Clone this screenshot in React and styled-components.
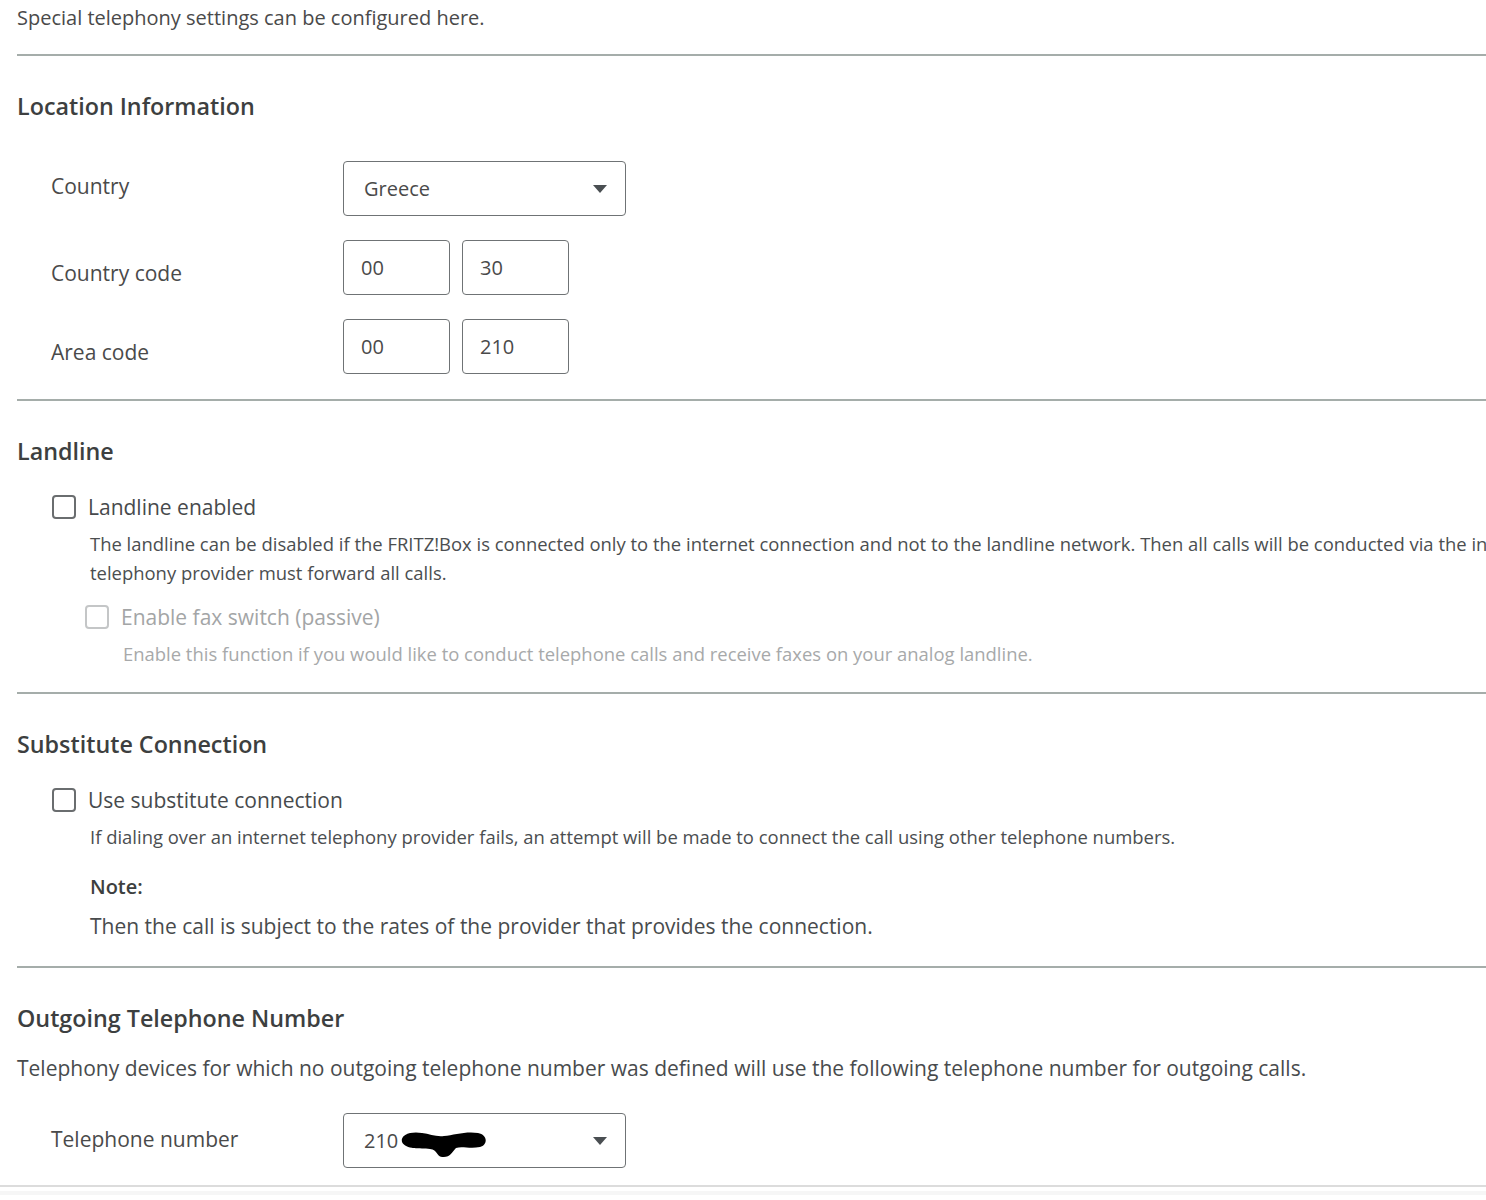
import React from "react";
import styled, { createGlobalStyle } from "styled-components";

const GlobalStyle = createGlobalStyle`
  html, body {
    margin: 0;
    padding: 0;
    background: #fff;
    overflow-x: hidden;
  }
  body {
    font-family: "Open Sans", "Noto Sans", "Liberation Sans", sans-serif;
    color: #484848;
  }
`;

const locationRows = [
  { label: "Country", kind: "select", value: "Greece", shift: -3 },
  { label: "Country code", kind: "pair", values: ["00", "30"], shift: 5 },
  { label: "Area code", kind: "pair", values: ["00", "210"], shift: 5 },
];

const Caret = () => (
  <CaretIcon viewBox="0 0 14 8" aria-hidden="true">
    <path d="M0 0 L14 0 L7 8 Z" fill="#4a4f52" />
  </CaretIcon>
);

const Redaction = () => (
  <RedactIcon viewBox="0 0 92 30" aria-hidden="true">
    <path
      d="M6 14 C4 6 16 3 26 5 C34 6 40 9 48 8 C58 7 70 3 82 5 C92 7 92 17 84 19 C74 21 66 18 60 20 C56 24 54 30 46 29 C40 28 42 22 34 21 C24 20 10 22 6 14 Z"
      fill="#000"
    />
  </RedactIcon>
);

const Checkbox = ({ disabled }) => <Box $disabled={disabled} />;

const App = () => {
  return (
    <>
      <GlobalStyle />
      <Page>
        <Intro>Special telephony settings can be configured here.</Intro>

        <Section $bottom={25}>
          <Heading>Location Information</Heading>
          <Rows>
            {locationRows.map((row) => (
              <FormRow key={row.label}>
                <Label $shift={row.shift}>{row.label}</Label>
                {row.kind === "select" ? (
                  <Select>
                    <span>{row.value}</span>
                    <Caret />
                  </Select>
                ) : (
                  <Pair>
                    {row.values.map((v, i) => (
                      <TextInput key={i}>{v}</TextInput>
                    ))}
                  </Pair>
                )}
              </FormRow>
            ))}
          </Rows>
        </Section>

        <Section $bottom={24}>
          <Heading>Landline</Heading>
          <Option>
            <CheckRow>
              <Checkbox />
              <CheckLabel>Landline enabled</CheckLabel>
            </CheckRow>
            <Explain>
              The landline can be disabled if the FRITZ!Box is connected only to the internet
              connection and not to the landline network. Then all calls will be conducted via the
              internet. Your internet telephony provider must forward all calls.
            </Explain>
            <SubOption>
              <CheckRow>
                <Checkbox disabled />
                <CheckLabel $disabled>Enable fax switch (passive)</CheckLabel>
              </CheckRow>
              <Explain $disabled>
                Enable this function if you would like to conduct telephone calls and receive faxes
                on your analog landline.
              </Explain>
            </SubOption>
          </Option>
        </Section>

        <Section $bottom={25}>
          <Heading>Substitute Connection</Heading>
          <Option>
            <CheckRow>
              <Checkbox />
              <CheckLabel>Use substitute connection</CheckLabel>
            </CheckRow>
            <Explain>
              If dialing over an internet telephony provider fails, an attempt will be made to
              connect the call using other telephone numbers.
            </Explain>
            <Note>
              <NoteTitle>Note:</NoteTitle>
              <NoteText>
                Then the call is subject to the rates of the provider that provides the connection.
              </NoteText>
            </Note>
          </Option>
        </Section>

        <Section $bottom={17}>
          <Heading>Outgoing Telephone Number</Heading>
          <Lead>
            Telephony devices for which no outgoing telephone number was defined will use the
            following telephone number for outgoing calls.
          </Lead>
          <Rows $top={30}>
            <FormRow>
              <Label $shift={-2}>Telephone number</Label>
              <Select>
                <Masked>
                  210
                  <Redaction />
                </Masked>
                <Caret />
              </Select>
            </FormRow>
          </Rows>
        </Section>
      </Page>
      <Footer />
    </>
  );
};

export default App;

/* ================== STYLES ================== */

const Page = styled.div`
  width: 1800px;
  padding-left: 17px;
`;

const Intro = styled.p`
  margin: 0;
  font-size: 20px;
  line-height: 36px;
  color: #4a4a4a;
  padding-bottom: 18px;
`;

const Section = styled.section`
  border-top: 2px solid #a5adaa;
  padding: 35px 0 ${(p) => (p.$bottom != null ? p.$bottom : 24)}px;
`;

const Heading = styled.h2`
  margin: 0;
  font-size: 23.3px;
  line-height: 30px;
  font-weight: 600;
  color: #3d3f40;
`;

const Rows = styled.div`
  display: flex;
  flex-direction: column;
  gap: 24px;
  margin-top: ${(p) => (p.$top != null ? p.$top : 40)}px;
  padding-left: 34px;
`;

const FormRow = styled.div`
  display: flex;
  align-items: center;
`;

const Label = styled.div`
  width: 292px;
  font-size: 21px;
  line-height: 30px;
  color: #4a4a4a;
  position: relative;
  top: ${(p) => p.$shift || 0}px;
`;

const Select = styled.div`
  box-sizing: border-box;
  width: 283px;
  height: 55px;
  border: 1px solid #6f7375;
  border-radius: 4px;
  padding: 0 18px 0 20px;
  display: flex;
  align-items: center;
  justify-content: space-between;
  font-size: 20px;
  color: #4a4a4a;
`;

const CaretIcon = styled.svg`
  width: 14px;
  height: 8px;
`;

const Masked = styled.span`
  display: inline-flex;
  align-items: center;
`;

const RedactIcon = styled.svg`
  width: 92px;
  height: 30px;
  margin-left: -2px;
  margin-top: 4px;
`;

const Pair = styled.div`
  display: flex;
  gap: 12px;
`;

const TextInput = styled.div`
  box-sizing: border-box;
  width: 107px;
  height: 55px;
  border: 1px solid #6f7375;
  border-radius: 4px;
  padding-left: 17px;
  display: flex;
  align-items: center;
  font-size: 20px;
  color: #4a4a4a;
`;

const Option = styled.div`
  margin-top: 26px;
  padding-left: 35px;
`;

const SubOption = styled.div`
  margin-top: 15px;
  padding-left: 33px;
`;

const CheckRow = styled.div`
  display: flex;
  align-items: center;
  gap: 12px;
  height: 30px;
`;

const Box = styled.span`
  box-sizing: border-box;
  width: 24px;
  height: 24px;
  border: 2px solid ${(p) => (p.$disabled ? "#c4c6c7" : "#6a6d6f")};
  border-radius: 4px;
  flex-shrink: 0;
`;

const CheckLabel = styled.span`
  font-size: 21px;
  line-height: 30px;
  color: ${(p) => (p.$disabled ? "#a3a5a6" : "#474a4c")};
`;

const Explain = styled.p`
  margin: 7px 0 0 38px;
  width: 1640px;
  font-size: 18.45px;
  line-height: 29px;
  color: ${(p) => (p.$disabled ? "#a7a9aa" : "#4b4e50")};
`;

const Note = styled.div`
  margin: 21px 0 0 38px;
`;

const NoteTitle = styled.div`
  font-size: 20px;
  line-height: 30px;
  font-weight: 600;
  color: #3d3f40;
`;

const NoteText = styled.p`
  margin: 9px 0 0;
  font-size: 21px;
  line-height: 30px;
  color: #484b4d;
`;

const Lead = styled.p`
  margin: 20px 0 0;
  font-size: 21px;
  line-height: 30px;
  color: #484b4d;
`;

const Footer = styled.div`
  border-top: 2px solid #dcdcdc;
  height: 12px;
  background: linear-gradient(#fff 0 4px, #f6f6f6 4px 8px, #fff 8px);
`;
